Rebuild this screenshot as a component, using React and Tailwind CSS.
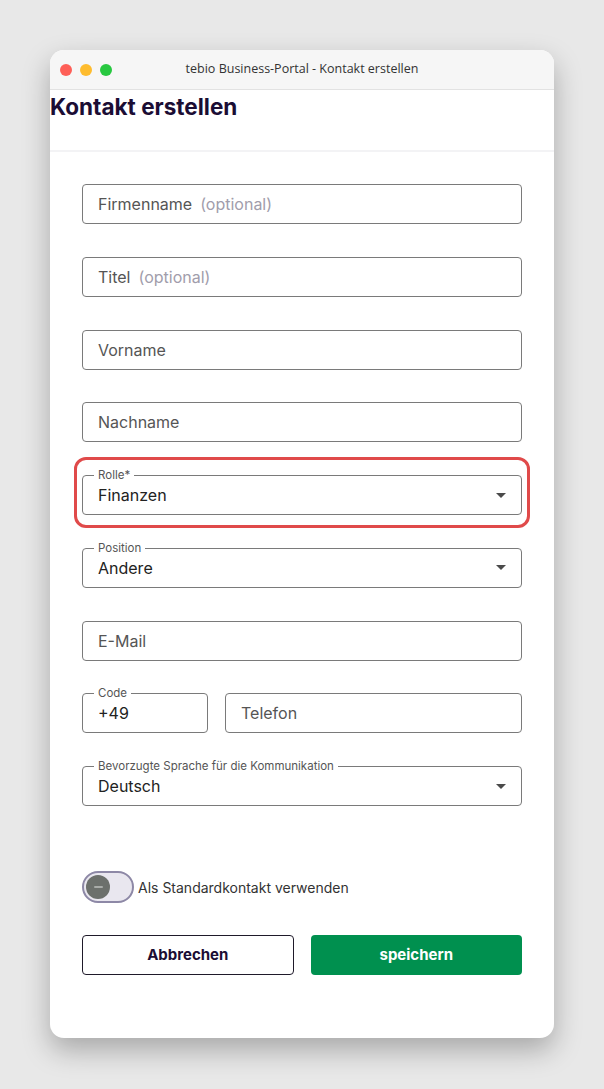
const textFields = [
  { label: 'Firmenname', optional: true },
  { label: 'Titel', optional: true },
  { label: 'Vorname' },
  { label: 'Nachname' },
];

function Caret() {
  return (
    <svg width="10" height="5" viewBox="0 0 10 5" className="shrink-0">
      <path d="M0 0h10L5 5z" fill="#4a4a4a" />
    </svg>
  );
}

function TextField({ label, optional }) {
  return (
    <div className="h-[40px] rounded-[4px] border border-[#7a7a7a] pl-[15px] flex items-center text-[16px]">
      <span className="text-[#555]">{label}</span>
      {optional && <span className="ml-[8px] text-[#a19dab]">(optional)</span>}
    </div>
  );
}

function OutlinedField({ label, value, select, className = '' }) {
  return (
    <div className={`relative h-[40px] rounded-[4px] border border-[#7a7a7a] pl-[15px] pr-[15px] flex items-center justify-between ${className}`}>
      <span className="absolute -top-[8px] left-[11px] bg-white px-[4px] text-[11.5px] leading-[14px] text-[#555]">
        {label}
      </span>
      <span className="text-[16px] text-[#222]">{value}</span>
      {select && <Caret />}
    </div>
  );
}

export default function App() {
  return (
    <div className="min-h-[1089px] bg-[#e8e8e8] pt-[50px] px-[50px] font-['Inter',sans-serif]">
      <div className="w-[504px] h-[988px] bg-white rounded-[14px] overflow-hidden shadow-[0_12px_28px_rgba(0,0,0,0.28)]">
        {/* title bar */}
        <div className="h-[40px] bg-[#f6f6f6] border-b border-[#e2e2e2] grid grid-cols-[1fr_auto_1fr] items-center">
          <div className="flex items-center gap-[8px] pl-[10px]">
            <span className="w-[12px] h-[12px] rounded-full bg-[#fe5f57]" />
            <span className="w-[12px] h-[12px] rounded-full bg-[#febc2e]" />
            <span className="w-[12px] h-[12px] rounded-full bg-[#28c840]" />
          </div>
          <div className="text-[12.5px] text-[#333] font-['Open_Sans',sans-serif]">
            tebio Business-Portal - Kontakt erstellen
          </div>
          <div />
        </div>

        {/* heading */}
        <div className="h-[62px] border-b-2 border-[#f3f3f5]">
          <h1 className="text-[22.5px] leading-[33px] font-bold text-[#1b0d34]">Kontakt erstellen</h1>
        </div>

        {/* form */}
        <div className="px-[32px] pt-[32px] flex flex-col gap-[32.75px]">
          {textFields.map((f) => (
            <TextField key={f.label} {...f} />
          ))}

          <div className="relative">
            <div className="absolute -left-[8px] -right-[8px] -top-[18px] -bottom-[13px] rounded-[12px] border-[3px] border-[#e04a4a]" />
            <OutlinedField label="Rolle*" value="Finanzen" select />
          </div>

          <OutlinedField label="Position" value="Andere" select />

          <TextField label="E-Mail" />

          <div className="flex gap-[17px]">
            <OutlinedField label="Code" value="+49" className="w-[126px] shrink-0" />
            <div className="flex-1">
              <TextField label="Telefon" />
            </div>
          </div>

          <OutlinedField label="Bevorzugte Sprache für die Kommunikation" value="Deutsch" select />
        </div>

        {/* toggle */}
        <div className="px-[32px] mt-[65px] flex items-center gap-[4px]">
          <div className="w-[52px] h-[32px] rounded-full border-2 border-[#8d88a6] bg-[#e9e7ef] flex items-center pl-[2px]">
            <div className="w-[24px] h-[24px] rounded-full bg-[#6c706c] flex items-center justify-center">
              <span className="w-[9px] h-[2px] bg-[#a9aca9] rounded" />
            </div>
          </div>
          <span className="text-[14px] text-[#333]">Als Standardkontakt verwenden</span>
        </div>

        {/* buttons */}
        <div className="px-[32px] mt-[32px] grid grid-cols-2 gap-[17px]">
          <button className="h-[40px] rounded-[4px] border border-[#1f1a2a] bg-white text-[15px] font-bold text-[#1b0d34]">
            Abbrechen
          </button>
          <button className="h-[40px] rounded-[4px] bg-[#00904f] text-[15px] font-bold text-white">
            speichern
          </button>
        </div>
      </div>
    </div>
  );
}
